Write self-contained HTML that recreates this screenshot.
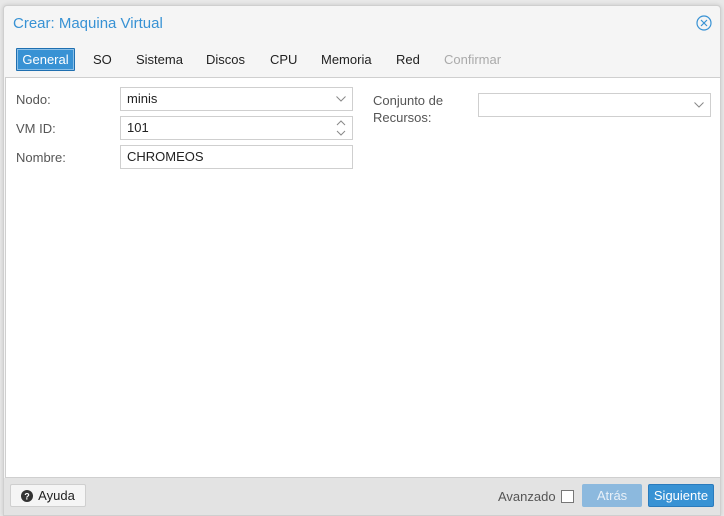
<!DOCTYPE html>
<html style="overflow:hidden;height:516px"><head><meta charset="utf-8"><style>
*{box-sizing:border-box;margin:0;padding:0}
body{width:724px;height:516px;background:#e8e8e8;font-family:"Liberation Sans",Helvetica,sans-serif;font-size:13px;color:#222;position:relative;overflow:hidden}
.win{position:absolute;left:3px;top:5px;width:718px;height:511px;background:#f5f5f5;border:1px solid #cfcfcf;border-radius:4px 4px 0 0;box-shadow:0 0 4px rgba(0,0,0,.15);overflow:hidden}
.title{position:absolute;left:9px;top:9px;font-size:15px;color:#3892d4}
.close{position:absolute;left:692px;top:9px}
.tab{position:absolute;top:46px;font-size:13px;color:#222}
.sel{left:12px;top:42px;width:59px;height:23px;background:#3892d4;color:#fff;border:1px solid #1f6fb0;box-shadow:inset 0 0 0 1px #8cc0e8;text-align:center;line-height:21px;border-radius:1px}
.panel{position:absolute;left:1px;top:71px;width:716px;height:401px;background:#fff;border:1px solid #cfcfcf}
.lbl{position:absolute;color:#555;font-size:13px}
.inp{position:absolute;height:24px;border:1px solid #cfcfcf;background:#fff;padding-left:6px;line-height:22px;color:#222}
.foot{position:absolute;left:0;top:472px;width:716px;height:48px;background:#e3e3e3}
.btn{position:absolute;height:23px;border-radius:2px;line-height:21px;text-align:center;font-size:13px}
</style></head><body>
<div class="win">
<div class="title">Crear: Maquina Virtual</div>
<svg class="close" width="16" height="16" viewBox="0 0 16 16"><circle cx="8" cy="8" r="7" fill="none" stroke="#3892d4" stroke-width="1.2"/><path d="M5 5L11 11M11 5L5 11" stroke="#3892d4" stroke-width="1.2"/></svg>
<div class="tab sel">General</div>
<div class="tab" style="left:89px">SO</div>
<div class="tab" style="left:132px">Sistema</div>
<div class="tab" style="left:202px">Discos</div>
<div class="tab" style="left:266px">CPU</div>
<div class="tab" style="left:317px">Memoria</div>
<div class="tab" style="left:392px">Red</div>
<div class="tab" style="left:440px;color:#aaa">Confirmar</div>
<div class="panel">
<div class="lbl" style="left:10px;top:14px">Nodo:</div>
<div class="inp" style="left:114px;top:9px;width:233px">minis<svg style="position:absolute;right:6px;top:8px" width="10" height="6"><path d="M0.5 0.5L5 5L9.5 0.5" fill="none" stroke="#888"/></svg></div>
<div class="lbl" style="left:10px;top:43px">VM ID:</div>
<div class="inp" style="left:114px;top:38px;width:233px">101<svg style="position:absolute;right:6px;top:3px" width="10" height="16"><path d="M1 5L5 1L9 5M1 11L5 15L9 11" fill="none" stroke="#888"/></svg></div>
<div class="lbl" style="left:10px;top:72px">Nombre:</div>
<div class="inp" style="left:114px;top:67px;width:233px">CHROMEOS</div>
<div class="lbl" style="left:367px;top:14px;line-height:17px">Conjunto de<br>Recursos:</div>
<div class="inp" style="left:472px;top:15px;width:233px"><svg style="position:absolute;right:6px;top:8px" width="10" height="6"><path d="M0.5 0.5L5 5L9.5 0.5" fill="none" stroke="#888"/></svg></div>
</div>
<div class="foot">
<div class="btn" style="left:6px;top:6px;width:76px;background:#f5f5f5;border:1px solid #cfcfcf;color:#222"><svg width="12" height="12" style="vertical-align:-2px;margin-right:5px" viewBox="0 0 12 12"><circle cx="6" cy="6" r="6" fill="#333"/><text x="6" y="9.5" font-size="9" font-weight="bold" fill="#fff" text-anchor="middle" font-family="Liberation Sans">?</text></svg>Ayuda</div>
<div style="position:absolute;left:494px;top:11px;color:#555">Avanzado</div>
<div style="position:absolute;left:557px;top:12px;width:13px;height:13px;border:1px solid #777;background:#fff"></div>
<div class="btn" style="left:578px;top:6px;width:60px;background:#8cb9de;border:1px solid #8cb9de;color:#e8f0f8">Atrás</div>
<div class="btn" style="left:644px;top:6px;width:66px;background:#3892d4;border:1px solid #2a7bbd;color:#fff">Siguiente</div>
</div>
</div>
</body></html>
